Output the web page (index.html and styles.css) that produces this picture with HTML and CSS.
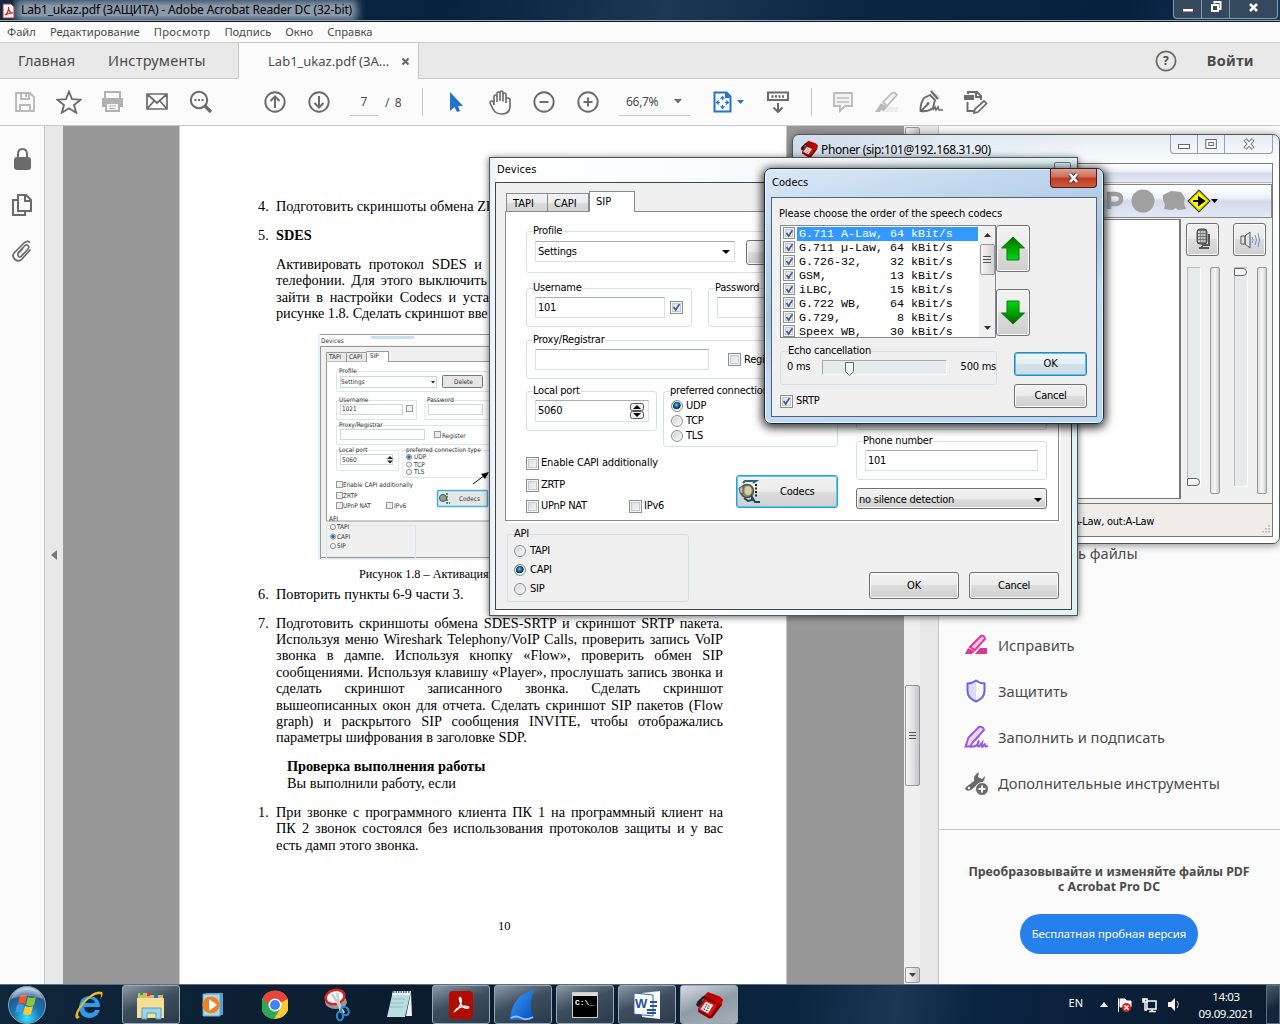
FILE: index.html
```html
<!DOCTYPE html>
<html lang="ru">
<head>
<meta charset="utf-8">
<title>Lab1_ukaz.pdf</title>
<link rel="stylesheet" href="styles.css">
</head>
<body>
<svg width="0" height="0" class="defs">
  <defs>
    <linearGradient id="green" x1="0" y1="0" x2="0" y2="1"><stop offset="0" stop-color="#0b6a08"/><stop offset=".5" stop-color="#00a400"/><stop offset="1" stop-color="#00d818"/></linearGradient>
    <linearGradient id="greendown" x1="0" y1="0" x2="0" y2="1"><stop offset="0" stop-color="#00d818"/><stop offset=".5" stop-color="#00a400"/><stop offset="1" stop-color="#0b5a08"/></linearGradient>
    <linearGradient id="fin" x1="0" y1="0" x2="1" y2="1"><stop offset="0" stop-color="#3aa0ff"/><stop offset="1" stop-color="#0848b8"/></linearGradient>
    <radialGradient id="orb" cx=".5" cy=".85" r=".8"><stop offset="0" stop-color="#35e0ff"/><stop offset=".45" stop-color="#1878b8"/><stop offset=".8" stop-color="#285a88"/><stop offset="1" stop-color="#a8c4d8"/></radialGradient>
    <symbol id="phone" viewBox="0 0 26 26"><path d="M7 9l5-6 12 5 1 5-9 12-3 .5-10-6v-3z" fill="#8a0000"/><path d="M9 8l12 5-7 10L3 17z" fill="#e01010"/><path d="M10 10l7 3-5 8-7-4z" fill="#f5ece8"/><path d="M10 12.500l4 2M9 14.500l4 2M8 16.500l4 2" stroke="#333" stroke-dasharray="1.500 1"/><path d="M1 13l1-3 5-5 4-2v3L7 8l-1 4-3 3z" fill="#222"/><path d="M9 4l3-3 11 4 3 3-1 4-4 1-2-4-8-3z" fill="#c80000"/><path d="M13 3l8 3" stroke="#400" stroke-dasharray="1.500 1.500"/></symbol>
    <symbol id="check" viewBox="0 0 13 13"><path d="M3 6l2.500 3.500L10 2.500" fill="none" stroke="#40579c" stroke-width="2"/></symbol>
  </defs>
</svg>

<div class="desktop">
<div class="acrobat">
  <header class="titlebar">
    <svg class="appicon" width="13" height="16" viewBox="0 0 13 16"><path d="M1 1h8l3 3v11H1z" fill="#fff" stroke="#d8201c"/><path d="M3 12c2-1 4-5 3.500-8c0 4 2 6 4.500 6c-3 0-5 .5-8 2z" fill="none" stroke="#d8201c" stroke-width="1.200"/></svg>
    <span class="title">Lab1_ukaz.pdf (ЗАЩИТА) - Adobe Acrobat Reader DC (32-bit)</span>
    <div class="winbtns">
      <span><svg width="12" height="14"><rect x=".5" y="8.500" width="11" height="3.500" fill="#fff" stroke="#445"/></svg></span>
      <span><svg width="12" height="14"><path d="M4.500 3.500V2h6v7H9M2 5h6v6H2z" fill="none" stroke="#fff" stroke-width="2"/></svg></span>
      <span><svg width="12" height="14"><path d="M2 4l7 7M9 4l-7 7" stroke="#fff" stroke-width="2.600"/></svg></span>
    </div>
  </header>
  <nav class="menu"><span>Файл</span><span>Редактирование</span><span class="m3">Просмотр</span><span>Подпись</span><span>Окно</span><span>Справка</span></nav>
  <div class="tabs">
    <span class="tab home">Главная</span><span class="tab tools">Инструменты</span>
    <div class="tab doc"><span class="docname">Lab1_ukaz.pdf (ЗА...</span><svg width="9" height="9"><path d="M1.500 1.500l6 6M7.500 1.500l-6 6" stroke="#666" stroke-width="2"/></svg></div>
    <div class="right"><svg width="22" height="22"><circle cx="11" cy="11" r="9.600" fill="none" stroke="#6b6b6b" stroke-width="1.800"/></svg><b class="q">?</b><b class="login">Войти</b></div>
  </div>
  <div class="toolbar">
    <i class="ic"><svg width="22" height="22"><path d="M2 2h14l4 4v14H2zM7 2v6h8V2M12 3v3M6 20v-6h10v6" fill="none" stroke="#b9b9b9" stroke-width="1.900"/></svg></i>
    <i class="ic"><svg width="26" height="24"><path d="M13 1.500l3 7.700 8.500.5-6.500 5.300 2.200 7.700L13 18.200l-7.200 4.500L8 15 1.500 9.700 10 9.200z" fill="none" stroke="#6b6b6b" stroke-width="1.800"/></svg></i>
    <i class="ic"><svg width="24" height="22"><path d="M4 7V1h15v6" fill="none" stroke="#b1b1b1" stroke-width="2"/><path d="M1 7h21v9H1z" fill="#b1b1b1"/><path d="M5 12h13v8H5z" fill="#fbfbfb" stroke="#b1b1b1" stroke-width="2"/><path d="M8 15h7M8 17.500h6" stroke="#b1b1b1"/></svg></i>
    <i class="ic"><svg width="24" height="20"><path d="M2 2h20v15H2zM2 2l10 9 10-9M2 17l7-8M22 17l-7-8" fill="none" stroke="#6b6b6b" stroke-width="1.700"/></svg></i>
    <i class="ic"><svg width="24" height="24"><circle cx="10" cy="10" r="8.200" fill="none" stroke="#6b6b6b" stroke-width="2"/><path d="M16 16l6 6" stroke="#6b6b6b" stroke-width="3.200"/><path d="M5.500 10h9" stroke="#6b6b6b" stroke-width="2" stroke-dasharray="2 1.500"/></svg></i>
    <i class="ic g30"><svg width="22" height="22"><circle cx="11" cy="11" r="9.700" fill="none" stroke="#6b6b6b" stroke-width="1.900"/><path d="M11 17V6M6.500 10L11 5.500l4.500 4.500" fill="none" stroke="#6b6b6b" stroke-width="2"/></svg></i>
    <i class="ic"><svg width="22" height="22"><circle cx="11" cy="11" r="9.700" fill="none" stroke="#6b6b6b" stroke-width="1.900"/><path d="M11 5v11M6.500 12l4.500 4.500 4.500-4.500" fill="none" stroke="#6b6b6b" stroke-width="2"/></svg></i>
    <span class="pg">7</span><span class="of">/&nbsp; 8</span><i class="sep"></i>
    <i class="ic g12"><svg width="22" height="22"><path d="M5 1v19l4.500-4 2.500 5 3-1-2-5h5z" fill="#2373c9"/></svg></i>
    <i class="ic"><svg width="24" height="25"><path d="M6 15V7q0-2 1.500-2T9 7v5V3.500Q9 2 10.500 2T12 3.500V11 3q0-2 1.500-2T15 3v8.500V5q0-2 1.500-2T18 5v8V9.500Q18 8 20 8t2 2v6q0 8-8.500 8-6 0-8.500-5l-3-6q0-2 2-2 1.500 0 2 4z" fill="none" stroke="#6b6b6b" stroke-width="1.600"/></svg></i>
    <i class="ic"><svg width="22" height="22"><circle cx="11" cy="11" r="9.700" fill="none" stroke="#6b6b6b" stroke-width="1.900"/><path d="M6.500 11h9" stroke="#6b6b6b" stroke-width="2"/></svg></i>
    <i class="ic"><svg width="22" height="22"><circle cx="11" cy="11" r="9.700" fill="none" stroke="#6b6b6b" stroke-width="1.900"/><path d="M6.500 11h9M11 6.500v9" stroke="#6b6b6b" stroke-width="2"/></svg></i>
    <span class="zoom"><span>66,7%</span><svg width="8" height="5"><path d="M0 0h8L4 4.500z" fill="#6b6b6b"/></svg></span>
    <i class="ic fit"><svg width="32" height="22"><path d="M1.500 1.500h12l4 4v15h-16z" fill="#fff" stroke="#2373c9" stroke-width="2"/><path d="M12 1l6 6h-6z" fill="#2373c9"/><path d="M9.500 5v4M9.500 14v4M3 11.500h4M12 11.500h4M7.500 8l2-2.500 2 2.500M7.500 15l2 2.500 2-2.500M6 9.500l-2.500 2 2.500 2M13 9.500l2.500 2-2.500 2" stroke="#2373c9" fill="none" stroke-width="1.200"/><path d="M24 9h7l-3.500 4z" fill="#2373c9"/></svg></i>
    <i class="ic ruler"><svg width="22" height="22"><rect x="1" y="1.500" width="20" height="7.500" fill="none" stroke="#6b6b6b" stroke-width="2"/><path d="M4.500 5.500h14" stroke="#6b6b6b" stroke-width="2.500" stroke-dasharray="2 1.500"/><path d="M11 12v8M6.500 16.500l4.500 4.500 4.500-4.500" fill="none" stroke="#6b6b6b" stroke-width="2"/></svg></i>
    <i class="sep s2"></i>
    <i class="ic g10"><svg width="22" height="22"><path d="M2 2h18v13h-7l-5 5v-5H2z" fill="#f2f2f2" stroke="#bcbcbc" stroke-width="1.900"/><path d="M5 7h12M5 11h12" stroke="#bcbcbc" stroke-width="1.500"/></svg></i>
    <i class="ic"><svg width="24" height="22"><path d="M10 16h13v5H6z" fill="#ececec"/><path d="M8 11l9-9q3-1.500 5 2L12 15z" fill="#f5f5f5" stroke="#b9b9b9" stroke-width="1.700"/><path d="M6 12l6 4-3 4-3-1-1 2H0z" fill="#b9b9b9"/></svg></i>
    <i class="ic"><svg width="24" height="24"><path d="M12 1l7 8" stroke="#6b6b6b" stroke-width="2.400"/><path d="M14 2l6 3 2 4z" fill="#ddd"/><path d="M11 5l-6 3q-4 6-3.500 13Q9 22 14 18l2-8zM2 21l7-7" fill="none" stroke="#6b6b6b" stroke-width="1.900"/><circle cx="9" cy="13.500" r="1.500" fill="#6b6b6b"/><path d="M14 20l2-3 1 3 2-3 1 3h4" fill="none" stroke="#6b6b6b" stroke-width="1.600"/></svg></i>
    <i class="ic"><svg width="25" height="24"><path d="M1 5h10v5H1z" fill="#6b6b6b"/><path d="M5 4V2h9l4 4v4M4.500 12v9h7M13 2v5h5" fill="none" stroke="#6b6b6b" stroke-width="1.900"/><path d="M11 23l1-4 9-8 2.500 2.500L15 22z" fill="#fff" stroke="#6b6b6b" stroke-width="1.700"/></svg></i>
  </div>

  <main class="work">
    <aside class="rail">
      <svg width="17" height="23"><path d="M4 11V6q0-5 4.500-5T13 6v5" fill="none" stroke="#6b6b6b" stroke-width="2"/><rect x="0" y="9" width="17" height="13" rx="3" fill="#6b6b6b"/></svg>
      <svg width="20" height="23"><path d="M6 1h8l5 5v11H6zM13 1v6h6M6 6H1v15h12v-4" fill="none" stroke="#6b6b6b" stroke-width="2"/></svg>
      <svg width="21" height="23"><path d="M6 13l6.500-7q2-2 3.500-.5t0 3.500L9 16.500q-1.500 1-2.500 0T6 13.500l5-5M18.500 9.500L10 19q-3.500 3.500-7 .5T2 13L12 3q3.500-3 6-.5" fill="none" stroke="#6b6b6b" stroke-width="1.700"/></svg>
    </aside>
    <div class="gutter"><svg width="6" height="10"><path d="M6 0v10L0 5z" fill="#777"/></svg></div>
    <div class="viewer">
      <article class="page">
        <div class="item"><span>4.</span><div><p>Подготовить скриншоты обмена ZRTP</p></div></div>
        <div class="item gap"><span>5.</span><div><p><b>SDES</b></p></div></div>
        <div class="para gap">
          <p class="cut w1">Активировать протокол SDES и</p>
          <p class="cut w2">телефонии. Для этого выключить</p>
          <p class="cut w3">зайти в настройки Codecs и уста</p>
          <p class="w4">рисунке 1.8. Сделать скриншот вве</p>
        </div>
        <svg class="figure" width="172" height="227" viewBox="0 0 172 227">
          <rect width="172" height="227" fill="#f0f0f0"/><rect width="172" height="12" fill="#fdfdfd"/><path d="M0 1.500h172M2.500 226V13.500H172M0 224.500h172" stroke="#999" fill="none"/>
          <rect width="2" height="227" fill="#dff3fa"/><rect x="53" y="3" width="43" height="3" fill="#c9dff5"/>
          <path d="M8.500 188V28.500H172V188z" fill="#fff" stroke="#999"/>
          <path d="M8.500 28.500v-9h20v9m0 0v-9h20v9" fill="#e8e8e8" stroke="#999"/><path d="M48.500 29v-10.500h22V29" fill="#fff" stroke="#999"/>
          <g fill="none" stroke="#dde5ec"><path d="M172 38.500H18.500v20H172M18.500 67.500h80v19h-80zM172 67.500h-65v19h65M172 92.500H18.500v19H172M18.500 117.500h62v20h-62zM172 117.500h-87v27h87M8.500 192.500h89v33h-89z"/></g>
          <g fill="#fff" stroke="#d2d5d8"><rect x="22.500" y="43.500" width="96" height="11"/><rect x="22.500" y="71.500" width="62" height="10"/><rect x="110.500" y="71.500" width="54" height="10"/><rect x="22.500" y="96.500" width="84" height="10"/><rect x="22.500" y="121.500" width="52" height="10"/></g>
          <rect x="124.500" y="42.500" width="40" height="12" rx="1" fill="#e6e6e6" stroke="#777"/>
          <g fill="#eee" stroke="#999"><rect x="88.500" y="72.500" width="6" height="6"/><rect x="116.500" y="98.500" width="6" height="6"/><rect x="18.500" y="148.500" width="6" height="6"/><rect x="18.500" y="159.500" width="6" height="6"/><rect x="18.500" y="169.500" width="6" height="6"/><rect x="68.500" y="169.500" width="6" height="6"/><circle cx="91" cy="124" r="2.600"/><circle cx="91" cy="131.500" r="2.600"/><circle cx="91" cy="139" r="2.600"/><circle cx="15" cy="194" r="2.600"/><circle cx="15" cy="203.500" r="2.600"/><circle cx="15" cy="213" r="2.600"/></g>
          <circle cx="91" cy="124" r="1.800" fill="#1870a8"/><circle cx="15" cy="203.500" r="1.800" fill="#1870a8"/>
          <rect x="119.500" y="157.500" width="50" height="16" rx="1" fill="#e4e6e8" stroke="#43b5da" stroke-width="1.500"/><circle cx="125" cy="165" r="3.500" fill="#98a078" stroke="#456"/><path d="M129 160v10h3" fill="none" stroke="#267" stroke-width="1.500" stroke-dasharray="2 1"/>
          <path d="M113 48h4l-2 2.500zM69 126l3-3 3 3zM69 127.500l3 3 3-3z" fill="#222"/>
          <path d="M155 151l12-9" stroke="#000"/><path d="M171 139l-8 2 4 5z"/>
          <g class="figtext"><text x="3" y="10">Devices</text><text x="11" y="26">TAPI</text><text x="31" y="26">CAPI</text><text x="52" y="25">SIP</text><text x="21" y="40">Profile</text><text x="23" y="51">Settings</text><text x="136" y="51">Delete</text><text x="21" y="69">Username</text><text x="24" y="78">1021</text><text x="109" y="69">Password</text><text x="21" y="94">Proxy/Registrar</text><text x="124" y="105">Register</text><text x="21" y="119">Local port</text><text x="24" y="129">5060</text><text x="88" y="119">preferred connection type</text><text x="96" y="126">UDP</text><text x="96" y="134">TCP</text><text x="96" y="141">TLS</text><text x="25" y="154">Enable CAPI additionally</text><text x="25" y="165">ZRTP</text><text x="25" y="175">UPnP NAT</text><text x="76" y="175">IPv6</text><text x="141" y="168">Codecs</text><text x="11" y="188">API</text><text x="19" y="196">TAPI</text><text x="19" y="206">CAPI</text><text x="19" y="215">SIP</text></g>
        </svg>
        <p class="caption">Рисунок 1.8 – Активация</p>
        <div class="item c6"><span>6.</span><div><p>Повторить пункты 6-9 части 3.</p></div></div>
        <div class="item gap"><span>7.</span><div class="just">
          <p>Подготовить скриншоты обмена SDES-SRTP и скриншот SRTP пакета.</p>
          <p>Используя меню Wireshark Telephony/VoIP Calls, проверить запись VoIP</p>
          <p>звонка в дампе. Используя кнопку «Flow», проверить обмен SIP</p>
          <p>сообщениями. Используя клавишу «Player», прослушать запись звонка и</p>
          <p>сделать скриншот записанного звонка. Сделать скриншот</p>
          <p>вышеописанных окон для отчета. Сделать скриншот SIP пакетов (Flow</p>
          <p>graph) и раскрытого SIP сообщения INVITE, чтобы отображались</p>
          <p class="last">параметры шифрования в заголовке SDP.</p>
        </div></div>
        <div class="check gap"><p><b>Проверка выполнения работы</b></p><p>Вы выполнили работу, если</p></div>
        <div class="item gap"><span>1.</span><div class="just">
          <p>При звонке с программного клиента ПК 1 на программный клиент на</p>
          <p>ПК 2 звонок состоялся без использования протоколов защиты и у вас</p>
          <p class="last">есть дамп этого звонка.</p>
        </div></div>
        <p class="num">10</p>
      </article>
    </div>
    <div class="vscroll"><i class="sb up"></i><i class="sb thumb"><svg width="9" height="9"><path d="M1 1.500h7M1 4.500h7M1 7.500h7" stroke="#555"/></svg></i><i class="sb down"><svg width="7" height="4"><path d="M0 0h7L3.500 4z" fill="#444"/></svg></i></div>
    <div class="gutter g2"></div>
    <aside class="panel">
      <div class="tool"><i></i><span>Объединить файлы</span></div>
      <div class="tool"></div>
      <div class="tool"><i><svg width="24" height="22"><path d="M11 20l5-6h7v6z" fill="#dc3896"/><path d="M6 13L17 2q3.500-1 4 3L11 16z" fill="#f9c7e2" stroke="#dc3896" stroke-width="2"/><path d="M1 20l3-6 7 3-3 3z" fill="#dc3896"/></svg></i><span>Исправить</span></div>
      <div class="tool"><i><svg width="22" height="24"><path d="M11 2v20Q3 19 3 12V5q4 0 8-3z" fill="#dcdcf8"/><path d="M11 1.500q4 3 8.500 3V12q0 7-8.500 10.500Q2.500 19 2.500 12V4.500q4.500 0 8.500-3z" fill="none" stroke="#6464e8" stroke-width="2"/></svg></i><span>Защитить</span></div>
      <div class="tool"><i><svg width="25" height="24"><path d="M1.500 21.500l3-9L15 2q4-1 5 3L9 17l-3 4.500zM9 17l6-6" fill="#ead9fb" stroke="#9a5ade" stroke-width="2"/><path d="M6 21.500q8 1 9-6q-3 6 0 6l3-3.500q-1 5 1 3.500l2-3q-1 4 3 2.500" fill="none" stroke="#9a5ade" stroke-width="2"/></svg></i><span>Заполнить и подписать</span></div>
      <div class="tool"><i><svg width="25" height="25"><path d="M2 16L10 10q-1-6 5-9l-1 5 4 2 3-3q0 7-7 8L7 19q-4 2-6-1z" fill="#6b6b6b"/><circle cx="5" cy="17" r="1.200" fill="#fff"/><circle cx="18" cy="18" r="6.500" fill="#6b6b6b" stroke="#fbfbfb"/><path d="M18 14.500v7M14.500 18h7" stroke="#fff" stroke-width="2"/></svg></i><span>Дополнительные инструменты</span></div>
      <div class="promo"><b>Преобразовывайте и изменяйте файлы PDF<br>с Acrobat Pro DC</b><a class="trial">Бесплатная пробная версия</a></div>
    </aside>
  </main>
</div>

<footer class="taskbar">
  <div class="start"><svg width="40" height="40"><circle cx="20" cy="20" r="18.500" fill="url(#orb)" stroke="#7fa3bd" stroke-width="1"/><path d="M13 11q3-2 7 0l-2 8q-3-2-7 0z" fill="#f05a22"/><path d="M21 12q4 2 8 0l-2 8q-4 2-8 0z" fill="#8cc63c"/><path d="M10 20q4-2 7 0l-2 8q-3-2-7 0z" fill="#3d9be0"/><path d="M18 21q4 2 8 0l-2 8q-4 2-8 0z" fill="#fcc62c"/><path d="M4 14a17 17 0 0 1 32 0q-16-6-32 0z" fill="#fff" opacity=".3"/></svg></div>
  <div class="tbi"><svg width="34" height="34"><path d="M28 19H12q1 6 6 6 4 0 5-3h5q-3 8-11 8-10-1-10-11Q8 8 18 8q10 1 10 11zM12 15h11q-1-4-5-4-5 0-6 4z" fill="#2f9be6"/><path d="M5 31Q0 28 10 15 22 1 30 4q2 2-2 8 2-6 0-6Q20 6 11 17 3 28 8 29z" fill="#eab62a"/></svg></div>
  <div class="tbi on"><svg width="30" height="32"><path d="M2 4h10l1 2h14v22H2z" fill="#d7b867"/><path d="M4 3h3v3H4z" fill="#28a745"/><path d="M11 4h3v3h-3z" fill="#d33"/><path d="M18 6h4v3h-4z" fill="#27c"/><path d="M1 9h27v20H1z" fill="#f5df93"/><path d="M6 30V19h19v11h-5v-6h-9v6z" fill="#9bd6ee" stroke="#4f9fc4"/></svg></div>
  <div class="tbi"><svg width="24" height="28"><path d="M5 2h17v22H5z" fill="#4fa3ce"/><path d="M2 3h17v22H2z" fill="#a9d8ee" stroke="#5aaad2"/><circle cx="10" cy="14" r="8.500" fill="#f08020"/><path d="M8 8l8 6-8 6z" fill="#fff"/></svg></div>
  <div class="tbi"><svg width="26" height="32" viewBox="2 1 26 30"><circle cx="15" cy="16" r="14" fill="#fcc934"/><path d="M15 16L2.500 9.500A14 14 0 0 1 28 10z" fill="#e8453c"/><path d="M15 16L2.500 9.500A14 14 0 0 0 14 30l6-10z" fill="#2da94f"/><path d="M15 10h13a14 14 0 0 0-25-1l6 8z" fill="#e8453c"/><circle cx="15" cy="16" r="6.500" fill="#fff"/><circle cx="15" cy="16" r="5" fill="#3f83f0"/></svg></div>
  <div class="tbi"><svg width="28" height="34"><ellipse cx="13" cy="14" rx="11" ry="7" fill="#999"/><ellipse cx="12" cy="9" rx="9.500" ry="7" fill="#fff" stroke="#d22" stroke-width="2.500" transform="rotate(-15 12 9)"/><path d="M9 6l12 19M14 5l4 20" stroke="#ccc" stroke-width="2.500"/><ellipse cx="22" cy="23" rx="3.500" ry="4.500" fill="none" stroke="#2f86c8" stroke-width="2.200" transform="rotate(-35 22 23)"/><ellipse cx="17" cy="28" rx="3" ry="4.500" fill="none" stroke="#2f86c8" stroke-width="2.200"/></svg></div>
  <div class="tbi"><svg width="28" height="32"><path d="M8 2h18l-6 26H2z" fill="#b9dde2"/><path d="M8 2h18l-1 4H7z" fill="#eef"/><path d="M26 3l1 24h-6z" fill="#eef2f2"/><path d="M8 3h17" stroke="#777" stroke-width="2" stroke-dasharray="1.500 1"/><path d="M7 10h13M6 14h13M5 18h13" stroke="#7eb5bd" opacity=".7"/></svg></div>
  <div class="tbi on"><svg width="24" height="28"><rect width="24" height="28" rx="4" fill="#b30b00"/><path d="M6 20C12 17 13 9 11.500 7S10 9 12 13s5 4.500 7 4-1-2.500-5-1.500S7 18 6 20z" fill="none" stroke="#fff" stroke-width="1.500"/></svg></div>
  <div class="tbi on"><svg width="28" height="32"><path d="M1 31Q3 5 26 1q-8 12-1 30z" fill="url(#fin)"/><path d="M2 29q5-3 10 0t12-1" fill="none" stroke="#8cc4ff" stroke-width="2"/></svg></div>
  <div class="tbi on"><svg width="26" height="26"><rect x=".5" y=".5" width="25" height="25" fill="#000" stroke="#ccc"/><path d="M1 2.500h24" stroke="#ddd" stroke-width="3"/><text x="3" y="13" class="cmd">C:\_</text></svg></div>
  <div class="tbi on"><svg width="30" height="32"><path d="M10 4l18-2v28l-18-2z" fill="#f8fbff"/><path d="M2 4l19 2v21L2 25z" fill="#fff" stroke="#3465b0"/><path d="M18 13h7M18 17h7M15 21h9M15 24h9" stroke="#2454a0" stroke-width="1.800"/><text x="3" y="19" class="wordw">W</text></svg></div>
  <div class="tbi on lit"><svg width="28" height="28"><use href="#phone"/></svg></div>
  <div class="tray"><span class="lang">EN</span>
    <svg width="8" height="5"><path d="M0 5h8L4 0z" fill="#eee"/></svg>
    <svg width="16" height="16"><path d="M1.500 1v14M3 2h5l2 2h4v6H3z" fill="#fff" stroke="#fff"/><circle cx="9.500" cy="10.500" r="4.500" fill="#d8281c"/><path d="M7.500 8.500l4 4M11.500 8.500l-4 4" stroke="#fff" stroke-width="1.500"/></svg>
    <svg width="16" height="16"><path d="M5 4h9v8H5zM7 14.500h7M10 12v2M2.500 1v4M1 2h4v3H1zM3 6v7h2" fill="none" stroke="#fff" stroke-width="1.500"/></svg>
    <svg width="14" height="16"><path d="M1 5h3l4-4v13l-4-4H1z" fill="#fff"/><path d="M10 4q3 3 0 7" stroke="#ccc" fill="none"/></svg>
    <div class="clock"><span>14:03</span><span>09.09.2021</span></div></div>
  <div class="peek"></div>
</footer>

<section class="win phoner">
  <header><svg width="18" height="18"><use href="#phone"/></svg><span class="wt">Phoner (sip:101@192.168.31.90)</span>
    <div class="aero"><span><svg width="12" height="12"><rect x=".5" y="6.500" width="11" height="4" fill="#fff" stroke="#667"/></svg></span><span><svg width="12" height="12"><rect x=".8" y="1.500" width="10.500" height="9" fill="#fff" stroke="#667"/><rect x="3.800" y="4.500" width="4.500" height="3" fill="none" stroke="#667"/></svg></span><span><svg width="14" height="12"><path d="M3 1.500l8 9M11 1.500l-8 9" stroke="#667" stroke-width="4"/><path d="M3.500 2l7 8M10.500 2l-7 8" stroke="#fff" stroke-width="2"/></svg></span></div>
  </header>
  <div class="pclient">
    <div class="pmenu"></div>
    <div class="ptool">
      <svg width="22" height="24"><path d="M7 20V5h6q6 0 6 5t-6 5H9" fill="none" stroke="#a0a0a0" stroke-width="4.500"/></svg>
      <svg width="24" height="24"><circle cx="12" cy="12" r="11.500" fill="#a0a0a0"/></svg>
      <svg width="24" height="22"><path d="M1 5l8-4 10 1 4 6-1 5 2 6-8 1-2-2-4 2-8-1 1-5-2-4z" fill="#a0a0a0"/></svg>
      <svg width="24" height="24"><path d="M12 .8L23.200 12 12 23.200.8 12z" fill="#a0a000" stroke="#222"/><path d="M12 3l9 9-9 9-9-9z" fill="#ffff00"/><path d="M6 12h8M12 8.500l5 3.500-5 3.500z" stroke="#000" stroke-width="2"/></svg>
      <svg width="7" height="4"><path d="M0 0h7L3.500 4z"/></svg>
    </div>
    <div class="pbody"><div class="pmain"></div>
      <div class="pside">
        <div class="pcol a"><span class="btn sq"><svg width="20" height="24"><rect x="4" y="1" width="10" height="15" rx="3" fill="#6d7672" stroke="#444"/><path d="M5 4h8M5 7h8M5 10h8M5 13h8" stroke="#e8eeea" stroke-width="1.500" stroke-dasharray="2 .7"/><path d="M16 6v11H9M6 20h10M9 18v2" fill="none" stroke="#555" stroke-width="2"/></svg></span><div class="sl"><i class="track"><b></b></i><i class="meter"></i></div></div>
        <div class="pcol b"><span class="btn sq"><svg width="22" height="20"><path d="M2 6h4v8H2zM6 6l5-4v16l-5-4z" fill="#e4e8e8" stroke="#555"/><path d="M13 7q2 3 0 6M16 5q3 5 0 10M19 3q3 7 0 14" stroke="#69c" fill="none"/></svg></span><div class="sl"><i class="track"><b></b></i><i class="meter"></i></div></div>
      </div>
    </div>
    <div class="pstatus"><span>in:A-Law, out:A-Law</span><svg width="9" height="9"><path d="M8 0v9M5 3v6M2 6v3" stroke="#aaa" stroke-width="1.500" stroke-dasharray="1.500 1.500"/></svg></div>
  </div>
</section>

<section class="win devices">
  <header><span class="dev">Devices</span><i></i></header>
  <div class="dclient">
    <div class="dtabs"><span class="ta">TAPI</span><span class="ca">CAPI</span><span class="si">SIP</span></div>
    <div class="dpanel">
      <div class="dleft">
        <fieldset class="f1"><legend>Profile</legend><div class="row"><div class="inp sel"><span>Settings</span><svg width="8" height="4"><path d="M0 0h8L4 4z"/></svg></div><span class="btn del"></span></div></fieldset>
        <div class="row r2">
          <fieldset class="f2"><legend>Username</legend><div class="row"><div class="inp"><span>101</span></div><i class="cb"><svg width="11" height="11"><use href="#check"/></svg></i></div></fieldset>
          <fieldset class="f3"><legend>Password</legend><div class="inp"></div></fieldset>
        </div>
        <fieldset class="f4"><legend>Proxy/Registrar</legend><div class="row"><div class="inp"></div><label><i class="cb"></i>Register</label></div></fieldset>
        <div class="row r3">
          <fieldset class="f5"><legend>Local port</legend><div class="inp"><span>5060</span><svg width="14" height="17"><rect x=".5" y=".5" width="13" height="7" rx="2" fill="#eee" stroke="#555"/><rect x=".5" y="8.500" width="13" height="7" rx="2" fill="#eee" stroke="#555"/><path d="M3 6l4-4 4 4zM3 10l4 4 4-4z"/></svg></div></fieldset>
          <fieldset class="f6"><legend>preferred connection type</legend><label><i class="rb on"></i>UDP</label><label><i class="rb"></i>TCP</label><label><i class="rb"></i>TLS</label></fieldset>
        </div>
        <div class="row r4">
          <div class="opts"><label><i class="cb"></i><span class="en">Enable CAPI additionally</span></label><label><i class="cb"></i>ZRTP</label><div class="row"><label class="nat"><i class="cb"></i>UPnP NAT</label><label><i class="cb"></i>IPv6</label></div></div>
          <span class="btn codecbtn"><svg width="24" height="24"><circle cx="9" cy="11" r="6.500" fill="#8d8b6c" stroke="#54543e" stroke-width="1.500"/><ellipse cx="10" cy="10.500" rx="3.500" ry="4.500" fill="#d2d0a8"/><path d="M1 8l4-2v8l-3-1z" fill="#bbb" stroke="#555"/><path d="M5 3l2-2h11l-3 2" stroke="#246a7c" stroke-width="2" fill="none"/><path d="M18 4v14" stroke="#222" stroke-width="2" stroke-dasharray="2 1.500"/><path d="M6 18l4 3 4-1v-3l3 5h5" stroke="#10505c" stroke-width="2" fill="none"/></svg><span>Codecs</span></span>
        </div>
      </div>
      <div class="dright">
        <fieldset class="h1"></fieldset>
        <fieldset class="h2"><legend>Phone number</legend><div class="inp"><span>101</span></div></fieldset>
        <div class="btn combo"><span>no silence detection</span><svg width="8" height="4"><path d="M0 0h8L4 4z"/></svg></div>
      </div>
    </div>
    <div class="dfoot"><fieldset class="api"><legend>API</legend><label><i class="rb"></i>TAPI</label><label><i class="rb on"></i>CAPI</label><label><i class="rb"></i>SIP</label></fieldset>
      <div class="dbtns"><span class="btn">OK</span><span class="btn">Cancel</span></div></div>
  </div>
</section>

<section class="win codecs">
  <header><span class="cod">Codecs</span><span class="close"><svg width="14" height="12"><path d="M3 2l7 8M10 2l-7 8" stroke="#445" stroke-width="4.500"/><path d="M3 2l7 8M10 2l-7 8" stroke="#fff" stroke-width="2.600"/></svg></span></header>
  <div class="cclient">
    <p class="ask">Please choose the order of the speech codecs</p>
    <div class="row">
      <div class="list">
        <div class="items">
          <div class="ci"><i class="cb"><svg width="11" height="11"><use href="#check"/></svg></i><pre class="hl">G.711 A-Law, 64 kBit/s</pre></div>
          <div class="ci"><i class="cb"><svg width="11" height="11"><use href="#check"/></svg></i><pre>G.711 µ-Law, 64 kBit/s</pre></div>
          <div class="ci"><i class="cb"><svg width="11" height="11"><use href="#check"/></svg></i><pre>G.726-32,    32 kBit/s</pre></div>
          <div class="ci"><i class="cb"><svg width="11" height="11"><use href="#check"/></svg></i><pre>GSM,         13 kBit/s</pre></div>
          <div class="ci"><i class="cb"><svg width="11" height="11"><use href="#check"/></svg></i><pre>iLBC,        15 kBit/s</pre></div>
          <div class="ci"><i class="cb"><svg width="11" height="11"><use href="#check"/></svg></i><pre>G.722 WB,    64 kBit/s</pre></div>
          <div class="ci"><i class="cb"><svg width="11" height="11"><use href="#check"/></svg></i><pre>G.729,        8 kBit/s</pre></div>
          <div class="ci"><i class="cb"><svg width="11" height="11"><use href="#check"/></svg></i><pre>Speex WB,    30 kBit/s</pre></div>
        </div>
        <div class="lsb"><svg width="7" height="4"><path d="M0 4h7L3.500 0z" fill="#333"/></svg><i><svg width="8" height="9"><path d="M0 1.500h8M0 4.500h8M0 7.500h8" stroke="#555"/></svg></i><svg class="dn" width="7" height="4"><path d="M0 0h7L3.500 4z" fill="#333"/></svg></div>
      </div>
      <div class="arrows"><span class="btn"><svg width="24" height="25"><path d="M12 1l11.500 11H18v12H6V12H.5z" fill="url(#green)" stroke="#0a7a0a"/></svg></span><span class="btn"><svg width="24" height="25"><path d="M12 24L.5 13H6V1h12v12h5.500z" fill="url(#greendown)" stroke="#0a7a0a"/></svg></span></div>
    </div>
    <div class="row low">
      <div><fieldset class="echo"><legend>Echo cancellation</legend><div class="row"><span class="ms">0 ms</span><i class="htrack"><svg width="9" height="15"><path d="M.5 1.500h8v9l-4 4-4-4z" fill="#f4f4f4" stroke="#666"/></svg></i><span class="ms5">500 ms</span></div></fieldset>
        <label class="srtp"><i class="cb"><svg width="11" height="11"><use href="#check"/></svg></i>SRTP</label></div>
      <div class="cbtns"><span class="btn def">OK</span><span class="btn">Cancel</span></div>
    </div>
  </div>
</section>
</div>
</body>
</html>
```
FILE: styles.css
```css
* { box-sizing: border-box; }
body { margin: 0; font-family: "Noto Sans", sans-serif; }
p, pre, fieldset { margin: 0; }
svg { display: block; flex: none; }
i, b { font-style: normal; }
.defs { position: absolute; }
.desktop { position: relative; width: 1280px; height: 1024px; overflow: hidden; display: flex; flex-direction: column; white-space: nowrap; }
.row { display: flex; }

/* reader window */
.acrobat { height: 984px; background: #fbfbfb; color: #4b4b4b; }
.titlebar { height: 22px; display: flex; align-items: center; background: linear-gradient(100deg, #0e2a49, #07213f 35%, #1c3855 52%, #0a2442 68%, #06203f 88%, #183a5a); border-bottom: 1px solid #0b1624; box-shadow: inset 0 -1px #9aa9b8; padding-left: 2px; }
.title { margin-left: 6px; font-size: 12px; color: #000; background: #8b9aaa; box-shadow: 0 0 8px 5px #8b9aaa; height: 11px; line-height: 10px; letter-spacing: -.15px; clip-path: inset(-5px -20px -5px -8px); }
.winbtns { margin-left: auto; margin-right: 2px; height: 19px; align-self: flex-start; display: flex; border: 1px solid #8a9aa9; border-top: 0; border-radius: 0 0 4px 4px; background: #34495e; }
.winbtns span { width: 28px; display: flex; justify-content: center; border-right: 1px solid #8a9aa9; }
.winbtns span:last-child { width: 47px; border: 0; }
.menu { height: 20px; display: flex; gap: 14px; align-items: center; padding: 0 0 2px 7px; font-size: 11.200px; }
.m3 { letter-spacing: .3px; }
.tabs { height: 37px; display: flex; background: #e9e9e9; border: 1px solid #c8c8c8; border-width: 1px 0; font-size: 14.500px; line-height: 35px; }
.home { margin-left: 18px; }
.tools { width: 98px; margin-left: 33px; letter-spacing: .22px; }
.doc { margin-left: 32px; width: 181px; height: 36px; background: #fbfbfb; border: 1px solid #c8c8c8; border-width: 0 1px; display: flex; align-items: center; padding-left: 29px; font-size: 13px; gap: 12px; }
.right { margin-left: auto; display: flex; align-items: center; padding-right: 26px; }
.q { width: 22px; margin-left: -22px; text-align: center; font-size: 12px; }
.login { margin-left: 30px; font-size: 14.500px; letter-spacing: .35px; }
.toolbar { height: 47px; display: flex; align-items: center; padding-left: 3px; border-bottom: 1px solid #c8c8c8; }
.ic { width: 44px; display: flex; justify-content: center; }
.g30 { margin-left: 30px; }
.pg { margin-left: 9px; width: 28px; height: 28px; line-height: 27px; border-bottom: 1px solid #c8c8c8; text-align: center; font-size: 12px; }
.of { margin-left: 7px; width: 37px; font-size: 12px; letter-spacing: -.3px; }
.sep { width: 1px; height: 28px; background: #c8c8c8; }
.g12 { margin-left: 11px; }
.ic.g12 + .ic, .ic.g12 + .ic + .ic, .ic.g12 + .ic + .ic + .ic { margin: 0; }
.zoom { margin-left: 9px; width: 71px; height: 28px; border-bottom: 1px solid #c8c8c8; font-size: 12px; letter-spacing: -.3px; display: flex; align-items: center; gap: 16px; padding-left: 7px; }
.fit { margin-left: 17px; }
.ruler { margin-left: 5px; }
.s2 { margin-left: 11px; }
.g10 { margin-left: 9px; }

.work { height: 858px; display: flex; }
.rail { width: 45px; border-right: 1px solid #c8c8c8; padding-top: 22px; display: flex; flex-direction: column; align-items: center; gap: 23px; }
.gutter { width: 18px; background: #e8e8e8; display: flex; align-items: center; justify-content: center; }
.g2 { width: 19px; border-right: 1px solid #c8c8c8; }
.viewer { width: 841px; background: #999; padding-left: 116px; }
.page { width: 608px; height: 858px; background: #fff; border: 1px solid #c8c8c8; border-width: 0 1px; padding: 72px 0 0 78px; color: #000; font: 14.3px/16.400px "Liberation Serif", serif; }
.item { display: grid; grid-template-columns: 18px 447px; }
.gap { margin-top: 12.600px; }
.para { margin-left: 18px; }
.just p { text-align-last: justify; }
.just p.last { text-align-last: left; }
.cut { text-align-last: justify; }
.w1 { width: 206px; }
.w2 { width: 211px; }
.w3 { width: 213px; }
.w4 { width: 213px; letter-spacing: -.05px; }
.figure { margin: 11px 0 0 60px; }
.figtext { font: 6.400px "DejaVu Sans Condensed", "DejaVu Sans", sans-serif; fill: #333; }
.caption { margin: 6px 0 0 101px; font-size: 12.200px; }
.c6 { margin-top: 3.500px; }
.check { margin-left: 29px; }
.num { margin-top: 65px; margin-left: 240px; font-size: 12.500px; }

.vscroll { width: 16px; background: #efefef; display: flex; flex-direction: column; align-items: center; }
.sb { width: 15px; border: 1px solid #999; border-radius: 2px; background: linear-gradient(90deg, #f6f6f6, #e2e2e4 50%, #c6c6ca); display: flex; align-items: center; justify-content: center; }
.up { height: 16px; margin-top: 1px; }
.thumb { height: 101px; margin-top: 542px; }
.down { height: 16px; margin-top: auto; margin-bottom: 1px; }
.panel { width: 341px; padding-top: 404px; }
.tool { height: 46px; display: flex; align-items: center; font-size: 14.700px; padding-left: 24px; }
.tool i { width: 26px; margin-right: 9px; display: flex; justify-content: center; }
.promo { margin-top: 23px; border-top: 1px solid #c8c8c8; height: 155px; padding: 34px 1px 0 0; text-align: center; font-size: 12.350px; line-height: 15px; display: flex; flex-direction: column; align-items: center; }
.trial { margin-top: 20px; width: 178px; height: 40px; border-radius: 20px; background: #2680eb; color: #fff; line-height: 40px; font-size: 11.300px; }

/* taskbar */
.taskbar { height: 40px; display: flex; background: linear-gradient(100deg, #10263a, #0a1b2e 35%, #0b2440 62%, #1b3754 70%, #0a2342 76%, #0c1a2c); border-top: 1px solid #5a6f84; }
.start { width: 60px; padding-left: 7px; }
.tbi { width: 58px; height: 39px; margin-right: 4px; display: flex; align-items: center; justify-content: center; }
.on { border: 1px solid #9aa8b4; border-radius: 3px; background: linear-gradient(160deg, #8b99a5, #3d4e5e 45%, #2a3b4c); }
.lit { background: linear-gradient(160deg, #d6dbe0, #8f9ba6 50%, #a7b0b8); }
.cmd { font: bold 8px "Liberation Mono", monospace; fill: #fff; }
.wordw { font: bold 13px "Liberation Sans", sans-serif; fill: #2454a0; }
.tray { margin-left: auto; display: flex; align-items: center; color: #fff; font-size: 11.500px; gap: 9px; }
.lang { font-size: 11px; margin-right: 8px; margin-bottom: 4px; }
.clock { width: 56px; margin-left: 8px; text-align: center; display: flex; flex-direction: column; line-height: 17px; letter-spacing: -.4px; }
.peek { width: 14px; margin-left: 12px; border: 1px solid #5a6f84; background: linear-gradient(150deg, #4a5a6a, #14263a 60%); }

/* shared dialog parts */
.win { position: absolute; color: #000; font: 11px/14px "DejaVu Sans Condensed", "DejaVu Sans", sans-serif; letter-spacing: -.24px; display: flex; flex-direction: column; }
.btn { display: flex; align-items: center; justify-content: center; border: 1px solid #707070; border-radius: 3px; background: linear-gradient(#f2f2f2, #ebebeb 50%, #dddddd 50%, #cfcfcf); box-shadow: inset 0 0 0 1px #fafafa; }
.win fieldset { border: 1px solid #d5dfe5; border-radius: 3px; padding: 0 8px; min-width: 0; }
.win legend { padding: 0; height: 14px; margin-left: -2px; white-space: nowrap; }
.inp { height: 21px; background: #fff; border: 1px solid #dbdfe6; border-top-color: #abadb3; border-radius: 1px; display: flex; align-items: center; justify-content: space-between; padding: 0 2px; }
.cb { width: 13px; height: 13px; flex: none; border: 1px solid #8e8f8f; box-shadow: inset 0 0 0 1px #f4f4f4, inset 0 0 0 2px #c5cad0; background: linear-gradient(135deg, #d5d9de, #fafafa); }
.rb { width: 12px; height: 12px; flex: none; border-radius: 50%; border: 1px solid #8e8f8f; box-shadow: inset 0 0 0 1px #f4f4f4; background: linear-gradient(135deg, #cfd3d8, #fafafa); }
.win .rb.on { background: radial-gradient(circle at 45% 40%, #6cc8ee 0, #0d5a94 30%, #12344e 48%, #e8f0f5 56%); border: 1px solid #8e8f8f; border-radius: 50%; }
.win label { display: flex; align-items: center; gap: 3px; }

.phoner { left: 792px; top: 134px; width: 488px; height: 410px; border: 1px solid #555; border-radius: 7px; background: linear-gradient(#d5e2ee99, #fcfefe00 30px), linear-gradient(90deg, #c9d9e8, #eef5f7 180px, #fcfefe 300px); box-shadow: 0 1px 8px #0007; padding: 0 6px 6px 7px; }
.phoner header { height: 28px; display: flex; align-items: center; }
.wt { margin-left: 3px; font: 12px "Noto Sans", sans-serif; letter-spacing: -.36px; }
.aero { margin-left: auto; align-self: flex-start; height: 19px; display: flex; border: 1px solid #9a9fa2; border-top: 0; border-radius: 0 0 4px 4px; }
.aero span { width: 27px; border-right: 1px solid #9a9fa2; display: flex; align-items: center; justify-content: center; }
.aero span:last-child { width: 47px; border: 0; }
.pclient { flex: 1; border: 1px solid #777; background: #f0f0f0; display: flex; flex-direction: column; }
.pmenu { height: 19px; background: linear-gradient(#fff, #eff1fa 40%, #d4daed 50%, #e4e8f5); border-bottom: 1px solid #b5b8c4; }
.ptool { height: 34px; margin-top: 1px; border: 1px solid #888; border-left: 0; background: linear-gradient(#fff, #eff1fa 40%, #d4daed 50%, #e4e8f5); display: flex; align-items: center; gap: 7px; padding-left: 301px; }
.ptool svg:nth-child(4) { margin-left: -6px; }
.ptool svg:last-child { margin-left: -7px; }
.pbody { flex: 1; display: flex; padding-top: 1px; }
.pmain { width: 380px; background: #fff; border: 1px solid #777; border-width: 1px 2px 1px 0; margin-bottom: 4px; }
.pside { flex: 1; display: flex; padding: 4px 0 0 5px; gap: 13px; }
.sq { width: 33px; height: 33px; }
.sl { display: flex; margin-top: 11px; gap: 9px; padding-left: 1px; }
.track { width: 14px; height: 220px; background: #e7eaea; border: 1px solid #ccc; border-color: #bbb #fff #fff #bbb; }
.track b { display: block; width: 13px; height: 8px; border: 1px solid #666; border-radius: 1px 4px 4px 1px; background: #f4f4f4; margin-left: -1px; }
.a .track b { margin-top: 210px; }
.meter { width: 10px; height: 227px; border: 1px solid #999; border-radius: 2px; background: linear-gradient(90deg, #ddd, #f8f8f8 50%, #ccc); }
.pstatus { height: 33px; background: #f0ecea; border-top: 1px solid #777; display: flex; align-items: center; justify-content: space-between; padding: 3px 2px 0 260px; }
.pstatus svg { align-self: flex-end; margin-bottom: 2px; }

.devices { left: 489px; top: 157px; width: 589px; height: 459px; border: 1px solid #555; background: linear-gradient(90deg, #e4f1fb, #fff 12px, #f5f9fb 60%, #def3f6); box-shadow: 0 1px 7px #0009; padding: 0 5px 5px; }
.devices header { height: 24px; display: flex; align-items: center; justify-content: space-between; padding-left: 2px; }
.devices header i { width: 17px; height: 17px; border: 1px solid #778; margin-right: 1px; border-radius: 2px; }
.dev, .cod { letter-spacing: .05px; }
.dclient { flex: 1; border: 1px solid #444; background: #f0f0f0; padding: 8px 12px 0 9px; }
.dtabs { display: flex; align-items: flex-end; height: 21px; padding-left: 1px; margin-bottom: -1px; letter-spacing: 0; }
.dtabs span { width: 42px; height: 19px; line-height: 19px; padding-left: 6px; border: 1px solid #8a8a92; background: linear-gradient(#f4f4f4, #ebebeb 50%, #dcdcdc 50%, #d2d2d2); }
.dtabs .ca { width: 41px; border-left: 0; }
.dtabs .si { width: 46px; height: 21px; background: #fff; border-bottom: 0; }
.dpanel { height: 310px; border: 1px solid #8a8a92; background: #fff; display: flex; gap: 18px; padding: 12px 0 0 20px; box-shadow: 2px 2px #fff; }
.dleft { width: 312px; }
.f1 { height: 49px; }
.devices .f1 { padding-top: 3px; }
.f1 .inp { width: 200px; }
.sel svg { margin-right: 2px; }
.del { width: 80px; height: 25px; margin: -1px 0 0 11px; }
.r2 { margin-top: 8px; gap: 16px; }
.devices .f2, .devices .f3, .devices .f4, .devices .f5 { padding-top: 2px; }
.f2 { width: 166px; height: 46px; }
.f2 .inp { width: 131px; margin-right: 5px; }
.f2 .cb { margin-top: 4px; }
.f3 { width: 130px; height: 46px; }
.f4 { margin-top: 6px; height: 46px; }
.f4 .inp { width: 174px; margin-right: 19px; }
.r3 { margin-top: 5px; gap: 6px; align-items: flex-start; }
.f5 { width: 131px; height: 47px; }
.f5 .inp { width: 114px; height: 22px; }
.f5 svg { margin-right: 2px; }
.f6 { width: 175px; height: 63px; }
.devices .f6 { padding-left: 7px; }
.f6 legend { margin-left: -1px; }
.f6 label { height: 15px; }
.r4 { margin-top: 9px; justify-content: space-between; }
.opts label { height: 14px; margin-bottom: 8px; gap: 2px; }
.opts .row label { margin-top: -1px; }
.en { letter-spacing: -.14px; }
.nat { width: 103px; }
.codecbtn { width: 102px; height: 33px; margin-top: 19px; border-color: #2a9fd0; box-shadow: inset 0 0 0 1px #5ccbf2; justify-content: flex-start; gap: 18px; padding-left: 1px; }
.dright { width: 191px; padding-top: 150px; }
.h1 { height: 56px; }
.devices .h2 { margin-top: 4px; height: 46px; padding-top: 2px; }
.combo { margin-top: 8px; height: 21px; justify-content: space-between; padding: 2px 4px 0 2px; }
.dfoot { display: flex; justify-content: space-between; padding-left: 2px; }
.api { width: 182px; height: 75px; margin-top: 6px; }
.devices .api { padding: 0 6px; }
.api legend { margin-left: 0; }
.api label { height: 19px; gap: 4px; }
.dbtns { display: flex; gap: 10px; margin-top: 51px; }
.dbtns .btn { width: 90px; height: 27px; }

.codecs { left: 764px; top: 168px; width: 340px; height: 256px; border: 1px solid #1d2a38; border-radius: 7px; background: linear-gradient(165deg, #dbe9f7, #bcd4ec 25%, #a9c4e0 45%, #c4dcf2 60%, #b6d7f7); box-shadow: inset 0 0 0 1px #e8f4ff, 0 2px 10px 2px #000c; padding: 0 6px 6px; }
.codecs header { height: 28px; display: flex; justify-content: space-between; align-items: center; padding-left: 1px; }
.close { align-self: flex-start; width: 47px; height: 19px; border: 1px solid #5a1a14; border-top: 0; border-radius: 0 0 4px 4px; background: linear-gradient(#e0a090, #cf6a55 45%, #bd3a20 50%, #cc5a40); display: flex; align-items: center; justify-content: center; }
.cclient { flex: 1; border: 1px solid #556270; background: #f0f0f0; padding: 9px 9px 0 7px; }
.ask { letter-spacing: -.1px; }
.list { width: 216px; height: 113px; margin-top: 4px; margin-left: 1px; border: 1px solid #828790; background: #fff; display: flex; }
.items { width: 198px; height: 111px; overflow: hidden; padding-top: 1px; }
.ci { height: 14px; display: flex; padding-left: 2px; }
.ci .cb { width: 12px; height: 12px; }
.ci pre { margin-left: 2px; padding-left: 2px; width: 181px; font: 11.700px/15px "Liberation Mono", monospace; letter-spacing: -.02px; height: 14px; }
.ci .hl { background: #3399ff; color: #fff; }
.lsb { flex: 1; background: #f0f0f0; display: flex; flex-direction: column; align-items: center; padding: 7px 0; }
.lsb i { width: 15px; height: 31px; margin-top: 7px; border: 1px solid #999; border-radius: 2px; background: linear-gradient(90deg, #f6f6f6, #d0d0d4); display: flex; align-items: center; justify-content: center; }
.dn { margin-top: auto; }
.arrows { margin-top: 4px; }
.arrows .btn { width: 34px; height: 47px; margin-bottom: 17px; }
.low { justify-content: space-between; }
.echo { width: 217px; height: 41px; }
.codecs .echo { padding: 2px 0 0 6px; margin: -9px 0 0 1px; }
.echo legend { margin-left: 1px; }
.htrack { width: 125px; height: 15px; margin-left: 13px; background: #e7eaea; border: 1px solid #ccc; border-color: #aaa #fff #fff #aaa; padding-left: 22px; }
.ms5 { margin-left: 14px; }
.ms { width: 22px; }
.srtp { margin-top: 9px; margin-left: 1px; }
.cbtns { display: flex; flex-direction: column; gap: 8px; margin-top: -1px; }
.cbtns .btn { width: 73px; height: 24px; }
.cbtns .def { border-color: #3c7fb1; box-shadow: inset 0 0 0 1px #48c8f0; background: linear-gradient(#eef5f9, #e4eff6 50%, #d3e1ea 50%, #cbdbe5); }
```
